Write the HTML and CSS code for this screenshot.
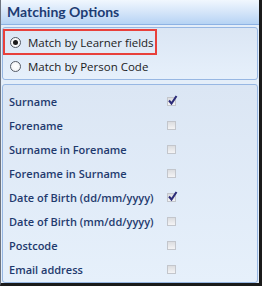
FILE: index.html
```html
<!DOCTYPE html>
<html lang="en">
<head>
    <meta charset="UTF-8">
    <meta name="viewport" content="width=device-width, initial-scale=1.0">
    <title>Matching Options</title>
    <link rel="stylesheet" href="styles.css">
</head>
<body>
    <div class="panel">
        <div class="panel-header">Matching Options</div>

        <div class="group radios">
            <label class="radio-row selected"><span class="radio checked"></span>Match by Learner fields</label>
            <label class="radio-row"><span class="radio"></span>Match by Person Code</label>
        </div>

        <div class="group fields">
            <div class="field-row"><span class="field-name">Surname</span><span class="check checked"><svg viewBox="0 0 11 11" width="11" height="11"><path d="M2 5.5 L4.5 8.5 L9.5 1" fill="none" stroke="#2b2b78" stroke-width="2"/></svg></span></div>
            <div class="field-row"><span class="field-name">Forename</span><span class="check"></span></div>
            <div class="field-row"><span class="field-name">Surname in Forename</span><span class="check"></span></div>
            <div class="field-row"><span class="field-name">Forename in Surname</span><span class="check"></span></div>
            <div class="field-row"><span class="field-name">Date of Birth (dd/mm/yyyy)</span><span class="check checked"><svg viewBox="0 0 11 11" width="11" height="11"><path d="M2 5.5 L4.5 8.5 L9.5 1" fill="none" stroke="#2b2b78" stroke-width="2"/></svg></span></div>
            <div class="field-row"><span class="field-name">Date of Birth (mm/dd/yyyy)</span><span class="check"></span></div>
            <div class="field-row"><span class="field-name">Postcode</span><span class="check"></span></div>
            <div class="field-row"><span class="field-name">Email address</span><span class="check"></span></div>
        </div>
    </div>
</body>
</html>
```

FILE: styles.css
```css
body {
    margin: 0;
    font-family: "Open Sans", "Noto Sans", sans-serif;
}

.panel {
    width: 262px;
    height: 286px;
    box-sizing: border-box;
    background-color: #e4eef9;
    border-left: 1px solid #6e7480;
    border-right: 3px solid #1b1b1b; /* sombra da janela */
    border-bottom: 3px solid #1b1b1b;
    display: flex;
    flex-direction: column;
}

.panel-header {
    height: 25px;
    box-sizing: border-box;
    padding-left: 6px;
    line-height: 24px;
    font-family: Lato, "Open Sans", sans-serif;
    font-size: 14px;
    font-weight: bold;
    color: #1d3c74;
    background: linear-gradient(#f1f7fe, #cfe2f8 60%, #b6d3f4);
    border-bottom: 1px solid #8db2e4;
}

.group {
    margin: 0 1px 0 1px;
    border: 1px solid #97b7e3;
    border-radius: 3px;
    background: linear-gradient(#dbe6f4, #e6f0fb);
}

.radios {
    margin-top: 2px;
    padding: 1px 0 2px 0;
}

.radio-row {
    display: flex;
    align-items: center;
    height: 22px;
    padding-left: 7px;
    font-size: 11.5px;
    color: #1c1c1c;
    white-space: nowrap;
}

.radio-row.selected {
    height: 26px;
    box-sizing: border-box;
    width: 154px;
    border: 2px solid #e8403b;
    padding-left: 5px;
}

.radio {
    flex: none;
    width: 11px;
    height: 11px;
    box-sizing: border-box;
    border: 1px solid #555b66;
    border-radius: 50%;
    background: radial-gradient(#ffffff, #eef0f3);
    margin-right: 7px;
    display: flex;
    align-items: center;
    justify-content: center;
}

.radio.checked::after {
    content: "";
    width: 5px;
    height: 5px;
    border-radius: 50%;
    background-color: #1a1a1a;
}

.fields {
    margin-top: 4px;
    padding: 4px 0 0 6px;
    flex: 1;
}

.field-row {
    display: grid;
    grid-template-columns: 158px 9px;
    align-items: center;
    height: 24px;
}

.field-name {
    font-size: 11px;
    font-weight: 600;
    color: #1f3a6e;
}

.check {
    width: 9px;
    height: 9px;
    box-sizing: border-box;
    border: 1px solid #c3c6cc;
    background: linear-gradient(#dcdde0, #f4f4f5);
    position: relative;
}

.check svg {
    position: absolute;
    left: -1px;
    top: -3px;
}
```
